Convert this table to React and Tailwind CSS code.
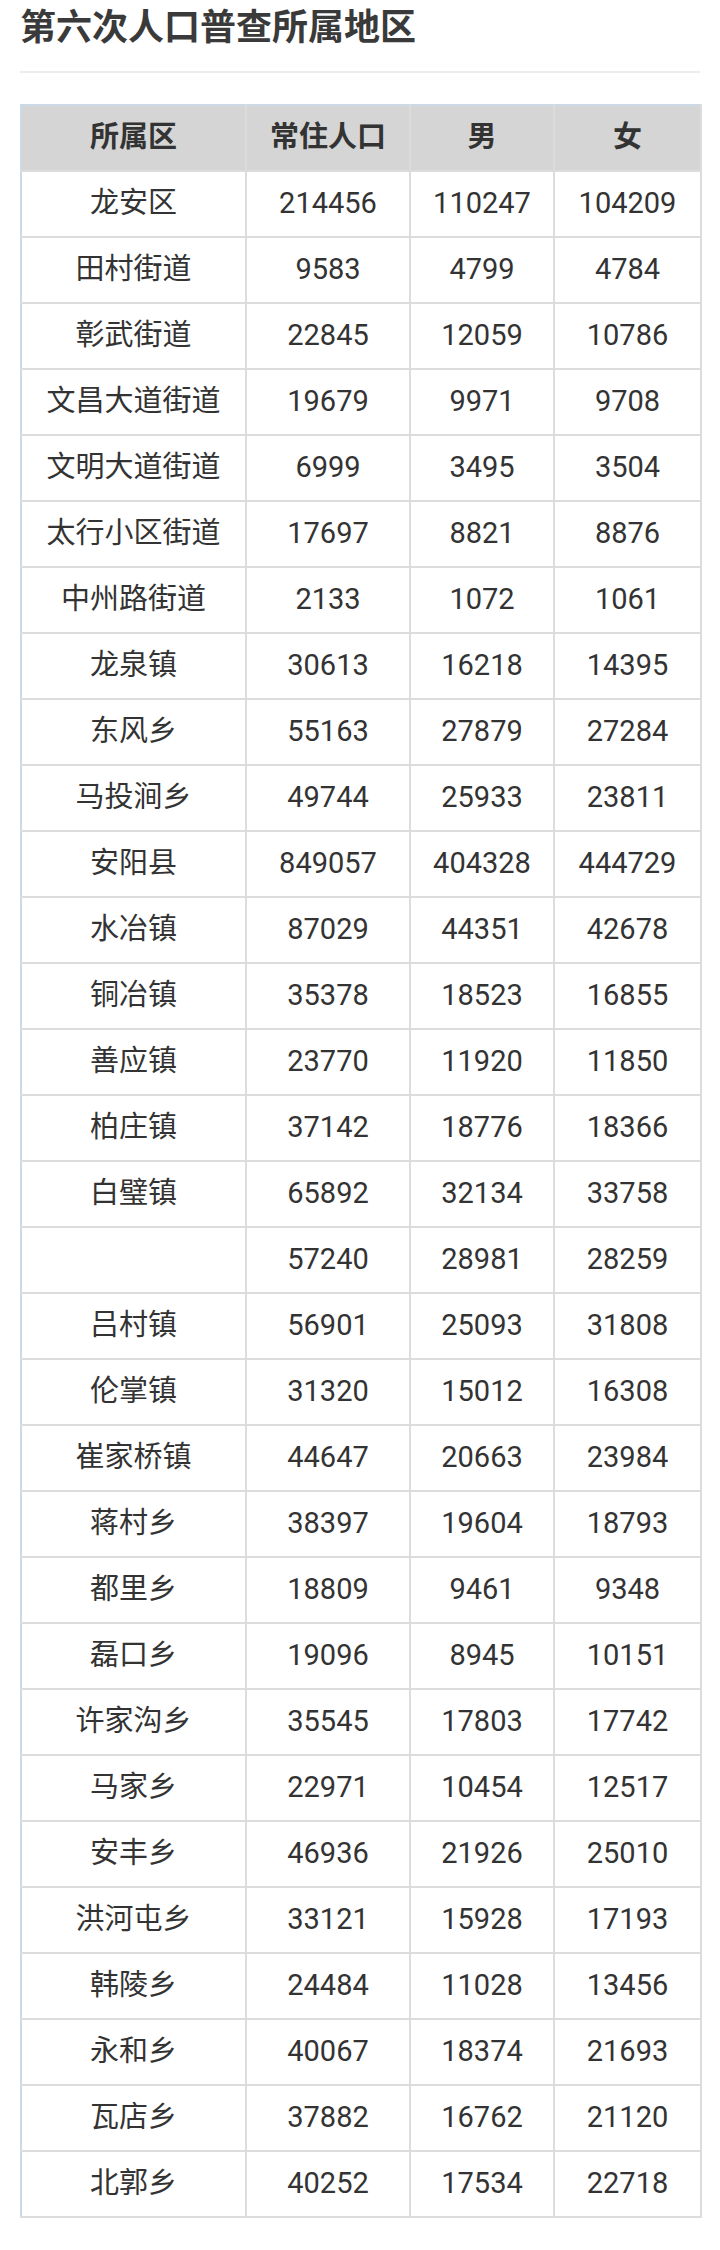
import React from 'react'

const rows = [
  ['龙安区', '214456', '110247', '104209'],
  ['田村街道', '9583', '4799', '4784'],
  ['彰武街道', '22845', '12059', '10786'],
  ['文昌大道街道', '19679', '9971', '9708'],
  ['文明大道街道', '6999', '3495', '3504'],
  ['太行小区街道', '17697', '8821', '8876'],
  ['中州路街道', '2133', '1072', '1061'],
  ['龙泉镇', '30613', '16218', '14395'],
  ['东风乡', '55163', '27879', '27284'],
  ['马投涧乡', '49744', '25933', '23811'],
  ['安阳县', '849057', '404328', '444729'],
  ['水冶镇', '87029', '44351', '42678'],
  ['铜冶镇', '35378', '18523', '16855'],
  ['善应镇', '23770', '11920', '11850'],
  ['柏庄镇', '37142', '18776', '18366'],
  ['白璧镇', '65892', '32134', '33758'],
  ['', '57240', '28981', '28259'],
  ['吕村镇', '56901', '25093', '31808'],
  ['伦掌镇', '31320', '15012', '16308'],
  ['崔家桥镇', '44647', '20663', '23984'],
  ['蒋村乡', '38397', '19604', '18793'],
  ['都里乡', '18809', '9461', '9348'],
  ['磊口乡', '19096', '8945', '10151'],
  ['许家沟乡', '35545', '17803', '17742'],
  ['马家乡', '22971', '10454', '12517'],
  ['安丰乡', '46936', '21926', '25010'],
  ['洪河屯乡', '33121', '15928', '17193'],
  ['韩陵乡', '24484', '11028', '13456'],
  ['永和乡', '40067', '18374', '21693'],
  ['瓦店乡', '37882', '16762', '21120'],
  ['北郭乡', '40252', '17534', '22718'],
]

const headers = ['所属区', '常住人口', '男', '女']

const App = () => {
  return (
    <div
      className="w-[720px] h-[2250px] bg-white text-[#333] px-5 pt-[2px]"
      style={{ fontFamily: 'Roboto, "Noto Sans CJK SC", sans-serif' }}
    >
      <h2 className="text-[36px] font-bold leading-[52px] text-[#3a3a3a]">第六次人口普查所属地区</h2>
      <div className="mt-[17px] h-[2px] bg-[#ececec]" />

      <table className="mt-[31px] w-[680px] table-fixed border-collapse text-[29px]">
        <colgroup>
          <col className="w-[225px]" />
          <col className="w-[164px]" />
          <col className="w-[144px]" />
          <col className="w-[147px]" />
        </colgroup>
        <thead>
          <tr className="h-[66px] bg-[#d5d5d5]">
            {headers.map((h, i) => (
              <th
                key={h}
                className={`border-2 border-[#dcdcdc] border-t-[#ccdae8] font-bold text-center ${
                  i === 0 ? 'border-l-[#ccdae8]' : ''
                }`}
              >
                {h}
              </th>
            ))}
          </tr>
        </thead>
        <tbody>
          {rows.map((r, idx) => (
            <tr key={idx} className="h-[66px]">
              {r.map((c, i) => (
                <td
                  key={i}
                  className={`border-2 border-[#dcdcdc] text-center ${i === 0 ? 'border-l-[#ccdae8]' : ''}`}
                >
                  {c}
                </td>
              ))}
            </tr>
          ))}
        </tbody>
      </table>
    </div>
  )
}

export default App
